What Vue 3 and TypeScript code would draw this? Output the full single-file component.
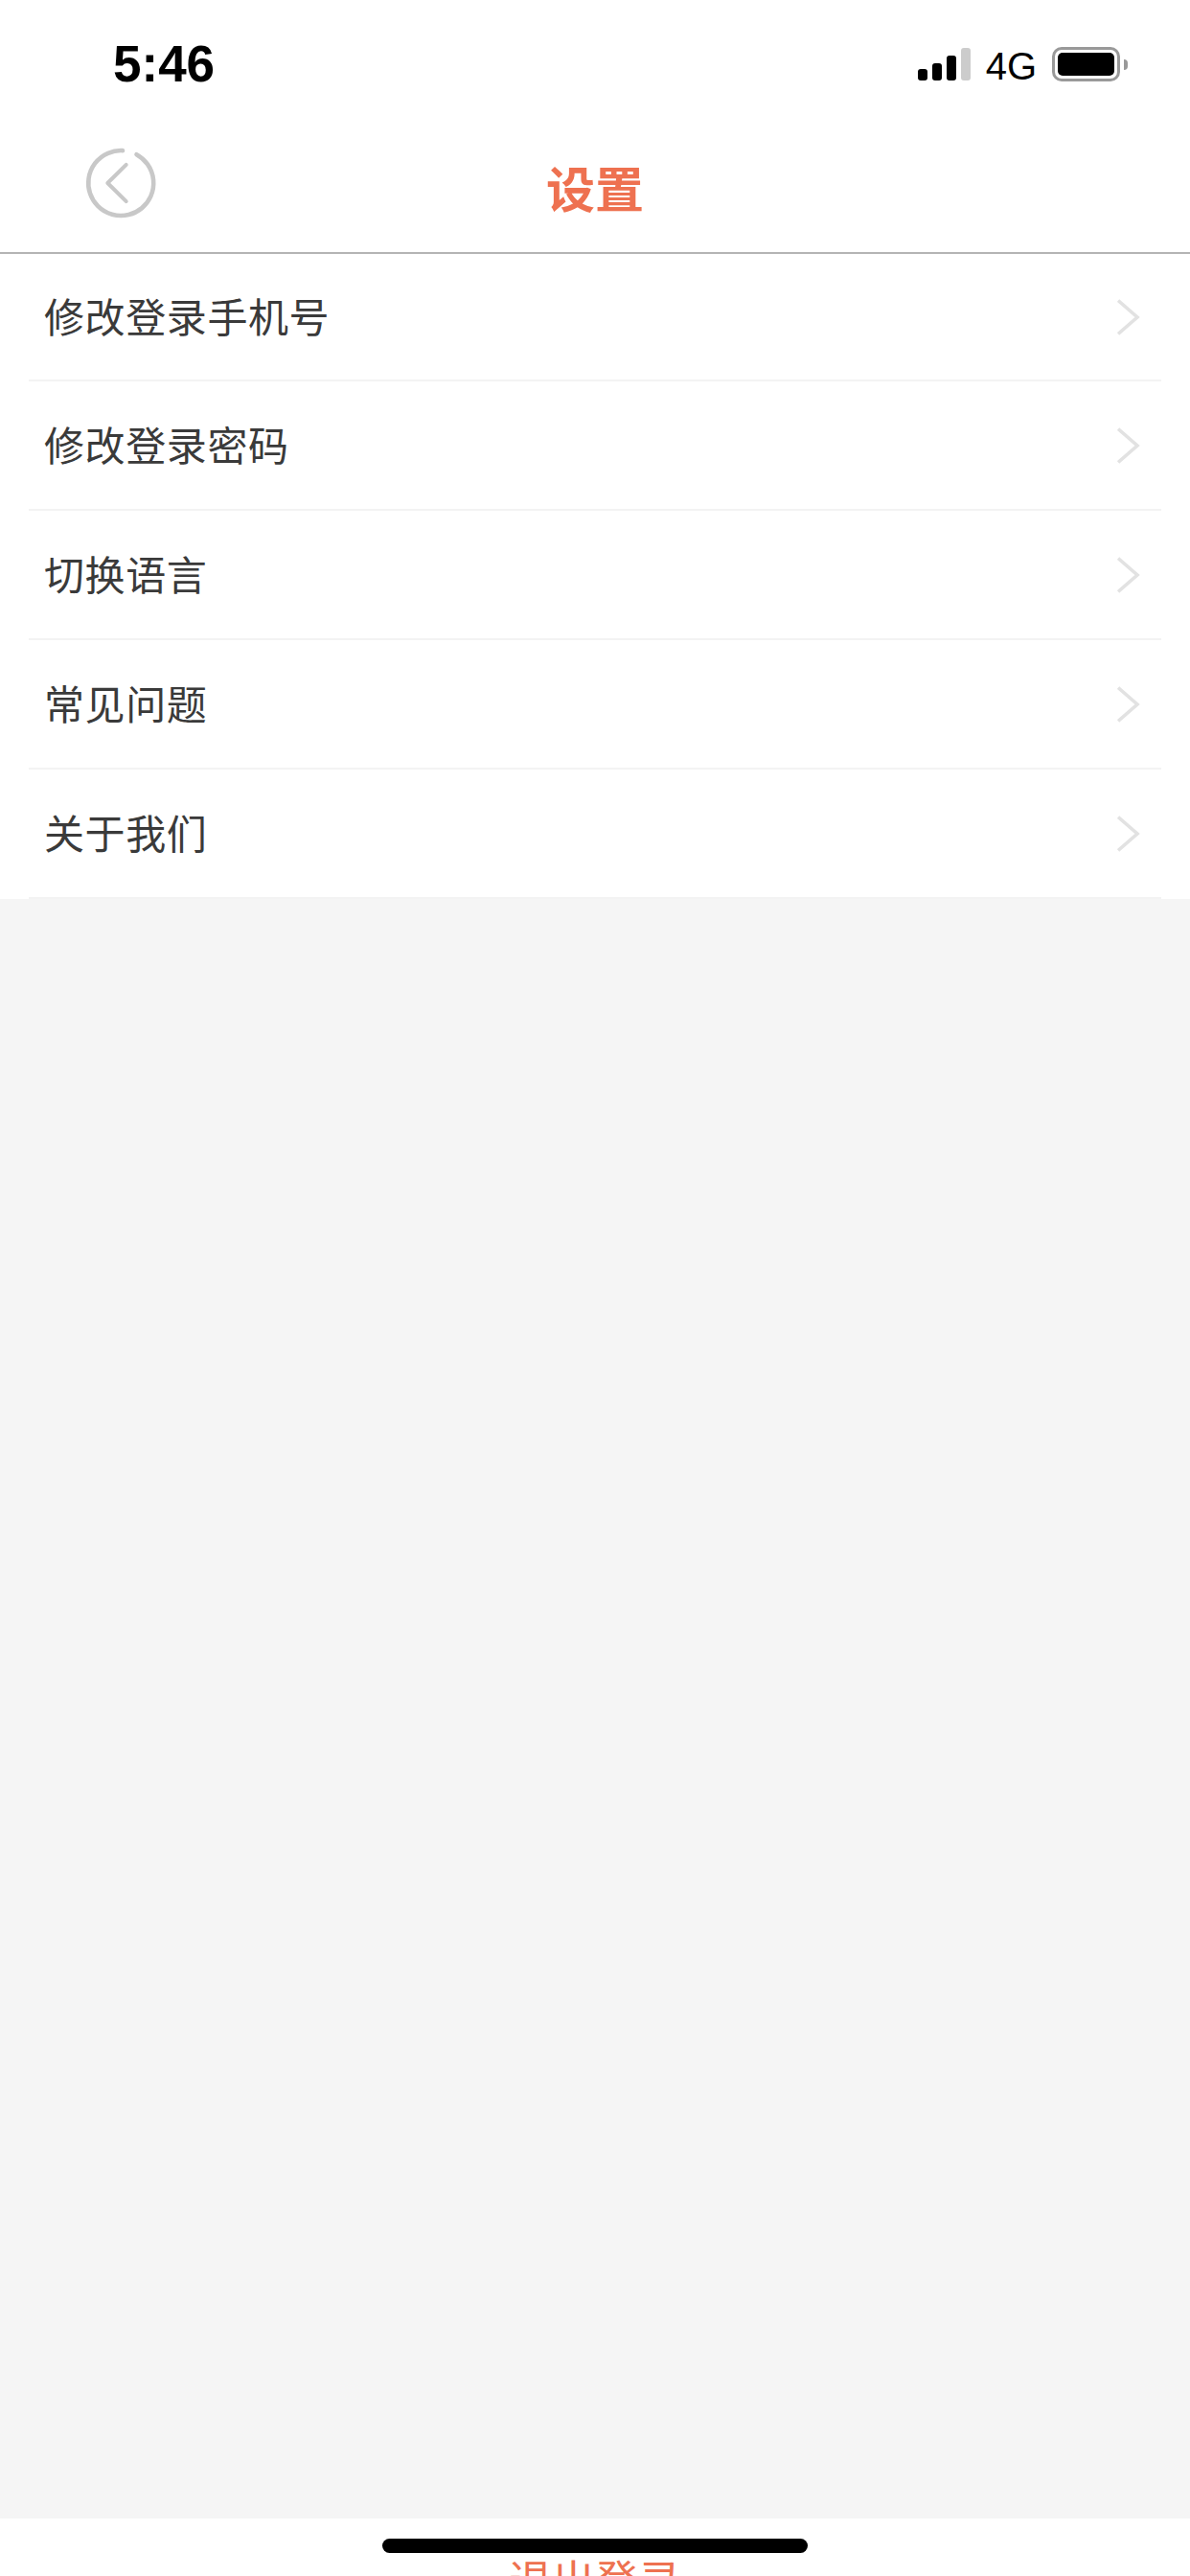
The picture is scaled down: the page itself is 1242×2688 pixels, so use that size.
<script setup lang="ts">
const rows: string[] = ["修改登录手机号", "修改登录密码", "切换语言", "常见问题", "关于我们"];
</script>

<template>
  <div class="page">
    <div class="status-bar">
      <span class="time">5:46</span>
      <div class="status-right">
        <div class="signal">
          <i class="bar bar-1"></i>
          <i class="bar bar-2"></i>
          <i class="bar bar-3"></i>
          <i class="bar bar-4"></i>
        </div>
        <span class="network">4G</span>
        <div class="battery">
          <div class="battery-body"><div class="battery-fill"></div></div>
          <div class="battery-nub"></div>
        </div>
      </div>
    </div>

    <header class="nav">
      <svg class="back" width="80" height="80" viewBox="0 0 80 80" fill="none" stroke="#c8c8c8" stroke-linecap="round">
        <path d="M42 6.1 A34 34 0 1 0 56.5 10.2" stroke-width="4.6" />
        <path d="M45.7 20.8 L26.3 40 L45.7 59.2" stroke-width="4" stroke-linejoin="round" />
      </svg>
      <h1 class="title">设置</h1>
    </header>

    <ul class="list">
      <li v-for="row in rows" :key="row" class="row">
        <span class="row-label">{{ row }}</span>
        <svg class="chevron" width="24" height="40" viewBox="0 0 24 40" fill="none" stroke="#e2e2e2" stroke-width="3.6">
          <path d="M1 2.5 L21 20 L1 37.5" />
        </svg>
      </li>
    </ul>

    <div class="spacer"></div>

    <footer class="footer">
      <span class="logout">退出登录</span>
    </footer>
    <div class="home-bar"></div>
  </div>
</template>

<style>
html,
body {
  margin: 0;
  background: #fff;
}
</style>

<style scoped>
.page {
  position: relative;
  display: flex;
  flex-direction: column;
  width: 1242px;
  height: 2688px;
  overflow: hidden;
  background: #fff;
  font-family: "Noto Sans CJK SC", "Liberation Sans", sans-serif;
}

.status-bar {
  display: flex;
  justify-content: space-between;
  align-items: flex-start;
  flex: none;
  box-sizing: border-box;
  height: 130px;
  padding: 38px 65px 0 118px;
}

.time {
  font-family: "Liberation Sans", sans-serif;
  font-size: 53px;
  font-weight: 700;
  line-height: 58px;
  color: #000;
}

.status-right {
  display: flex;
  align-items: flex-start;
  padding-top: 12px;
}

.signal {
  display: flex;
  align-items: flex-end;
  gap: 5px;
  height: 34px;
}

.bar {
  display: block;
  width: 10px;
  border-radius: 3px;
  background: #000;
}

.bar-1 {
  height: 12px;
}

.bar-2 {
  height: 18px;
}

.bar-3 {
  height: 26px;
}

.bar-4 {
  height: 34px;
  background: #ccc;
}

.network {
  margin-left: 16px;
  margin-top: -1px;
  font-family: "Liberation Sans", sans-serif;
  font-size: 40px;
  line-height: 40px;
  color: #000;
}

.battery {
  display: flex;
  align-items: center;
  margin-left: 16px;
  margin-top: -1px;
}

.battery-body {
  box-sizing: border-box;
  width: 71px;
  height: 36px;
  padding: 3px;
  border: 3px solid #999;
  border-radius: 10px;
}

.battery-fill {
  width: 100%;
  height: 100%;
  border-radius: 5px;
  background: #000;
}

.battery-nub {
  width: 4px;
  height: 11px;
  margin-left: 4px;
  border-radius: 0 4px 4px 0;
  background: #999;
}

.nav {
  display: grid;
  grid-template-columns: 1fr auto 1fr;
  flex: none;
  box-sizing: border-box;
  height: 135px;
  border-bottom: 2px solid #b4b4b4;
}

.back {
  display: block;
  margin: 21px 0 0 86px;
}

.title {
  margin: 35px 0 0;
  font-size: 51px;
  font-weight: 700;
  line-height: 60px;
  color: #ee7150;
}

.list {
  flex: none;
  margin: 0;
  padding: 0;
  list-style: none;
  background: #fff;
}

.row {
  display: flex;
  align-items: center;
  justify-content: space-between;
  box-sizing: border-box;
  height: 135px;
  margin: 0 30px;
  padding: 0 22px 0 16px;
  border-bottom: 2px solid #f3f3f3;
}

.row:first-child {
  height: 133px;
}

.row-label {
  padding-bottom: 4px;
  font-size: 42px;
  letter-spacing: 0.6px;
  line-height: 60px;
  color: #3a3a3a;
}

.chevron {
  display: block;
}

.spacer {
  flex: 1;
  background: #f5f5f5;
}

.footer {
  flex: none;
  height: 60px;
  overflow: hidden;
  background: #fff;
  text-align: center;
}

.logout {
  display: block;
  margin-top: 33px;
  font-size: 45px;
  line-height: 60px;
  color: #ee7150;
}

.home-bar {
  position: absolute;
  left: 399px;
  bottom: 24px;
  width: 444px;
  height: 15px;
  border-radius: 8px;
  background: #000;
}
</style>
